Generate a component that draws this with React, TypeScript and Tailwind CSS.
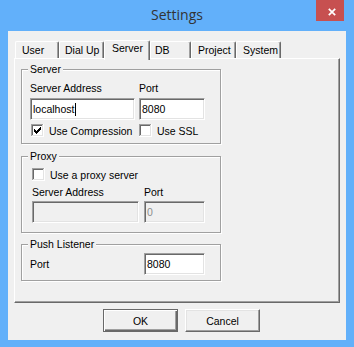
import React from "react";

const ui = "font-['Liberation_Sans',Arial,sans-serif] text-[10.5px] leading-[12px] text-black";

// classic 3D borders
const sunken =
  "border border-t-[#a0a0a0] border-l-[#a0a0a0] border-r-white border-b-white shadow-[inset_1px_1px_0_#696969,inset_-1px_-1px_0_#e3e3e3]";
const etched = "border border-[#a0a0a0] shadow-[inset_1px_1px_0_#fff,1px_1px_0_#fff]";

const tabs = [
  { label: "User", cls: "ml-[1px] w-[44px] pl-[6px]" },
  { label: "Dial Up", cls: "w-[45px] pl-[5px]" },
  { label: "Server", cls: "w-[46px] pl-[7px]", active: true },
  { label: "DB", cls: "w-[41px] pl-[4px]" },
  { label: "Project", cls: "w-[45px] pl-[6px]" },
  { label: "System", cls: "w-[45px] pl-[6px]" },
];

const checkPixels = [
  [3, 5],
  [4, 6],
  [5, 7],
  [6, 6],
  [7, 5],
  [8, 4],
  [9, 3],
];

function CheckBox({ checked }: { checked?: boolean }) {
  return (
    <svg width="13" height="13" viewBox="0 0 13 13" className="shrink-0" shapeRendering="crispEdges">
      <rect x="0" y="0" width="13" height="13" fill="#fff" />
      <rect x="0" y="0" width="12" height="1" fill="#a0a0a0" />
      <rect x="0" y="0" width="1" height="12" fill="#a0a0a0" />
      <rect x="1" y="1" width="10" height="1" fill="#696969" />
      <rect x="1" y="1" width="1" height="10" fill="#696969" />
      <rect x="1" y="11" width="11" height="1" fill="#e3e3e3" />
      <rect x="11" y="1" width="1" height="11" fill="#e3e3e3" />
      {checked &&
        checkPixels.map(([x, y]) => (
          <rect key={x} x={x} y={y} width="1" height="3" fill="#000" />
        ))}
    </svg>
  );
}

interface FieldProps {
  value?: string;
  w: string;
  disabled?: boolean;
  caret?: boolean;
}

function Field({ value, w, disabled, caret }: FieldProps) {
  return (
    <div
      className={`h-[22px] ${w} ${sunken} ${
        disabled ? "bg-[#f0f0f0] text-[#8d8d8d]" : "bg-white"
      } flex items-center pl-[2px]`}
    >
      {value}
      {caret && <span className="ml-[1px] inline-block w-px h-[13px] bg-black" />}
    </div>
  );
}

function Group({
  title,
  cls,
  children,
}: {
  title: string;
  cls: string;
  children: React.ReactNode;
}) {
  return (
    <div className={`w-[200px] ${cls} ${etched} flex flex-col items-start`}>
      <span className="-mt-[7px] ml-[6px] px-[2px] h-[12px] bg-[#f0f0f0]">{title}</span>
      {children}
    </div>
  );
}

export default function App() {
  return (
    <div className="w-[354px] h-[347px] bg-[#62b0fa] flex flex-col">
      {/* title bar */}
      <div className="h-[31px] flex items-start">
        <div className="w-[38px]" />
        <div className="flex-1 text-center pt-[5px] font-['Open_Sans',sans-serif] text-[14px] leading-[20px] text-[#333]">
          Settings
        </div>
        <div className="w-[38px]">
          <div className="w-[28px] h-[21px] bg-[#c75050] flex items-center justify-center pl-[4px] pt-[2px]">
            <svg width="8" height="8" viewBox="0 0 8 8">
              <path d="M0.8 0.8 L7.2 7.2 M7.2 0.8 L0.8 7.2" stroke="#fff" strokeWidth="1.7" />
            </svg>
          </div>
        </div>
      </div>

      {/* client area */}
      <div className={`mx-[8px] h-[309px] bg-[#f0f0f0] flex flex-col px-[6px] pt-[9px] ${ui}`}>
        <div className="h-[18px] flex items-end">
          {tabs.map((t) =>
            t.active ? (
              <div
                key={t.label}
                className={`relative z-10 h-[20px] -mb-[2px] pt-[1px] bg-[#f0f0f0] rounded-t-[2px] border-t border-l border-r border-t-white border-l-white border-r-[#696969] shadow-[inset_-1px_0_0_#a0a0a0] ${t.cls}`}
              >
                {t.label}
              </div>
            ) : (
              <div
                key={t.label}
                className={`h-[17px] pt-[2px] rounded-t-[2px] border-t border-l border-r border-t-white border-l-white border-r-[#696969] shadow-[inset_-1px_0_0_#a0a0a0] ${t.cls}`}
              >
                {t.label}
              </div>
            )
          )}
        </div>

        <div className="h-[245px] border border-t-white border-l-white border-r-[#696969] border-b-[#696969] shadow-[inset_-1px_-1px_0_#a0a0a0] pt-[10px] pl-[6px] flex flex-col items-start">
          <Group title="Server" cls="h-[75px]">
            <div className="mt-[7px] pl-[8px] flex gap-[4px]">
              <span className="w-[105px]">Server Address</span>
              <span>Port</span>
            </div>
            <div className="mt-[4px] pl-[8px] flex gap-[4px]">
              <Field w="w-[105px]" value="localhost" caret />
              <Field w="w-[66px]" value="8080" />
            </div>
            <div className="mt-[4px] pl-[9px] flex items-center">
              <CheckBox checked />
              <span className="ml-[5px] w-[90px]">Use Compression</span>
              <CheckBox />
              <span className="ml-[5px]">Use SSL</span>
            </div>
          </Group>

          <Group title="Proxy" cls="mt-[12px] h-[77px]">
            <div className="mt-[6px] pl-[10px] flex items-center">
              <CheckBox />
              <span className="ml-[5px]">Use a proxy server</span>
            </div>
            <div className="mt-[5px] pl-[10px] flex">
              <span className="w-[112px]">Server Address</span>
              <span>Port</span>
            </div>
            <div className="mt-[3px] pl-[10px] flex gap-[5px]">
              <Field w="w-[107px]" disabled />
              <Field w="w-[61px]" value="0" disabled />
            </div>
          </Group>

          <Group title="Push Listener" cls="mt-[11px] h-[37px]">
            <div className="mt-[3px] pl-[8px] flex items-center">
              <span className="w-[114px]">Port</span>
              <Field w="w-[61px]" value="8080" />
            </div>
          </Group>
        </div>

        <div className="mt-[6px] pl-[89px] flex gap-[7px]">
          <button className="w-[75px] h-[23px] bg-[#f0f0f0] border border-[#696969] shadow-[inset_1px_1px_0_#fff,inset_-1px_-1px_0_#696969,inset_-2px_-2px_0_#a0a0a0]">
            OK
          </button>
          <button className="w-[75px] h-[23px] bg-[#f0f0f0] border border-t-white border-l-white border-r-[#696969] border-b-[#696969] shadow-[inset_-1px_-1px_0_#a0a0a0,inset_1px_1px_0_#e3e3e3]">
            Cancel
          </button>
        </div>
      </div>
    </div>
  );
}
